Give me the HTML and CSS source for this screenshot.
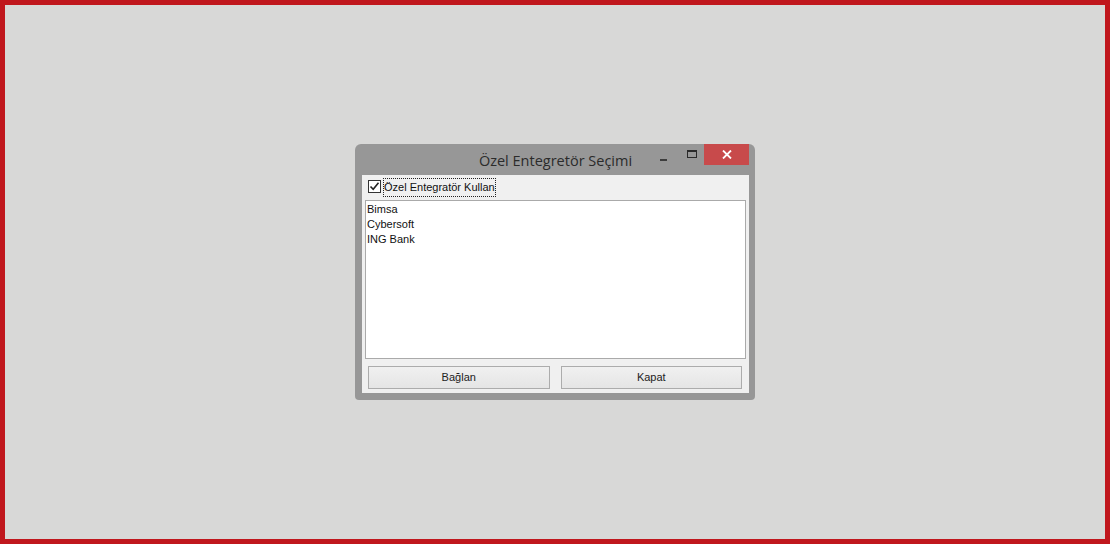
FILE: index.html
```html
<!DOCTYPE html>
<html lang="tr">
<head>
<meta charset="utf-8">
<title>Özel Entegretör Seçimi</title>
<link rel="stylesheet" href="styles.css">
</head>
<body>
<div class="desktop">
  <div class="window">
    <div class="titlebar">
      <div class="spacer"></div>
      <div class="title">Özel Entegretör Seçimi</div>
      <div class="controls">
        <span class="ctl min"><span class="min-bar"></span></span>
        <span class="ctl max"><span class="max-box"></span></span>
        <span class="ctl close">
          <svg width="10" height="9" viewBox="0 0 10 9"><path d="M1 0.5 L9 8.5 M9 0.5 L1 8.5" stroke="#fff" stroke-width="1.8" fill="none"/></svg>
        </span>
      </div>
    </div>
    <div class="client">
      <div class="check-row">
        <span class="checkbox">
          <svg width="11" height="11" viewBox="0 0 11 11"><path d="M1.5 5.5 L4.2 8.3 L9.5 1.8" stroke="#222" stroke-width="1.6" fill="none"/></svg>
        </span>
        <span class="check-label">Özel Entegratör Kullan</span>
      </div>
      <div class="listbox">
        <div class="item">Bimsa</div>
        <div class="item">Cybersoft</div>
        <div class="item">ING Bank</div>
      </div>
      <div class="buttons">
        <button class="btn">Bağlan</button>
        <button class="btn">Kapat</button>
      </div>
    </div>
  </div>
</div>
</body>
</html>
```
FILE: styles.css
```css
html, body {
  margin: 0;
  padding: 0;
}
body {
  width: 1110px;
  height: 544px;
  font-family: "Liberation Sans", Arial, sans-serif;
}
.desktop {
  box-sizing: border-box;
  width: 1110px;
  height: 544px;
  border: 5px solid #c0171d;
  background: #d8d8d7;
  display: flex;
  align-items: center;
  justify-content: center;
}
.window {
  width: 387px;
  background: #979797;
  border-radius: 6px 6px 4px 4px;
  padding: 0 6px 7px 7px;
  margin-top: -1px;
}
.titlebar {
  height: 31px;
  display: grid;
  grid-template-columns: 1fr auto 1fr;
  align-items: start;
}
.title {
  font-family: "Open Sans", "Noto Sans", sans-serif;
  font-size: 14.5px;
  color: #2b2b2b;
  line-height: 31px;
  padding-top: 1px;
  white-space: nowrap;
}
.controls {
  display: flex;
  justify-content: flex-end;
  align-items: flex-start;
}
.ctl {
  display: flex;
  align-items: center;
  justify-content: center;
  height: 21px;
}
.min {
  width: 24px;
}
.min-bar {
  display: block;
  width: 7px;
  height: 2px;
  background: #3d3d3d;
  margin-top: 11px;
  margin-right: 7px;
}
.max {
  width: 25px;
}
.max-box {
  display: block;
  width: 8px;
  height: 5px;
  border: 1px solid #2a2a2a;
  border-top-width: 2px;
  margin-top: 0;
}
.close {
  width: 45px;
  background: #c84a4b;
}
.client {
  background: #f0f0f0;
  height: 218px;
  padding: 0 7px 0 3px;
  display: flex;
  flex-direction: column;
}
.check-row {
  height: 25px;
  display: flex;
  align-items: flex-start;
  padding-left: 3px;
  padding-top: 3px;
  box-sizing: border-box;
}
.checkbox {
  box-sizing: border-box;
  width: 13px;
  height: 13px;
  border: 1px solid #333;
  background: #fff;
  display: flex;
  align-items: center;
  justify-content: center;
  margin-top: 2px;
}
.check-label {
  font-size: 11px;
  color: #111;
  margin-left: 2px;
  padding: 2px 0 2px 0;
  line-height: 13px;
  border: 1px dotted #222;
}
.listbox {
  box-sizing: border-box;
  height: 159px;
  margin-right: -4px;
  background: #fff;
  border: 1px solid #aaaaaa;
  padding: 1px 1px 0;
}
.item {
  font-size: 11px;
  line-height: 15px;
  color: #111;
}
.buttons {
  display: flex;
  gap: 11px;
  padding: 7px 0 0 3px;
}
.btn {
  flex: 1;
  height: 23px;
  margin: 0;
  padding: 0;
  font-family: "Liberation Sans", Arial, sans-serif;
  font-size: 11px;
  color: #222;
  border: 1px solid #acacac;
  background: linear-gradient(#f0f0f0, #e5e5e5);
  border-radius: 0;
}
```
